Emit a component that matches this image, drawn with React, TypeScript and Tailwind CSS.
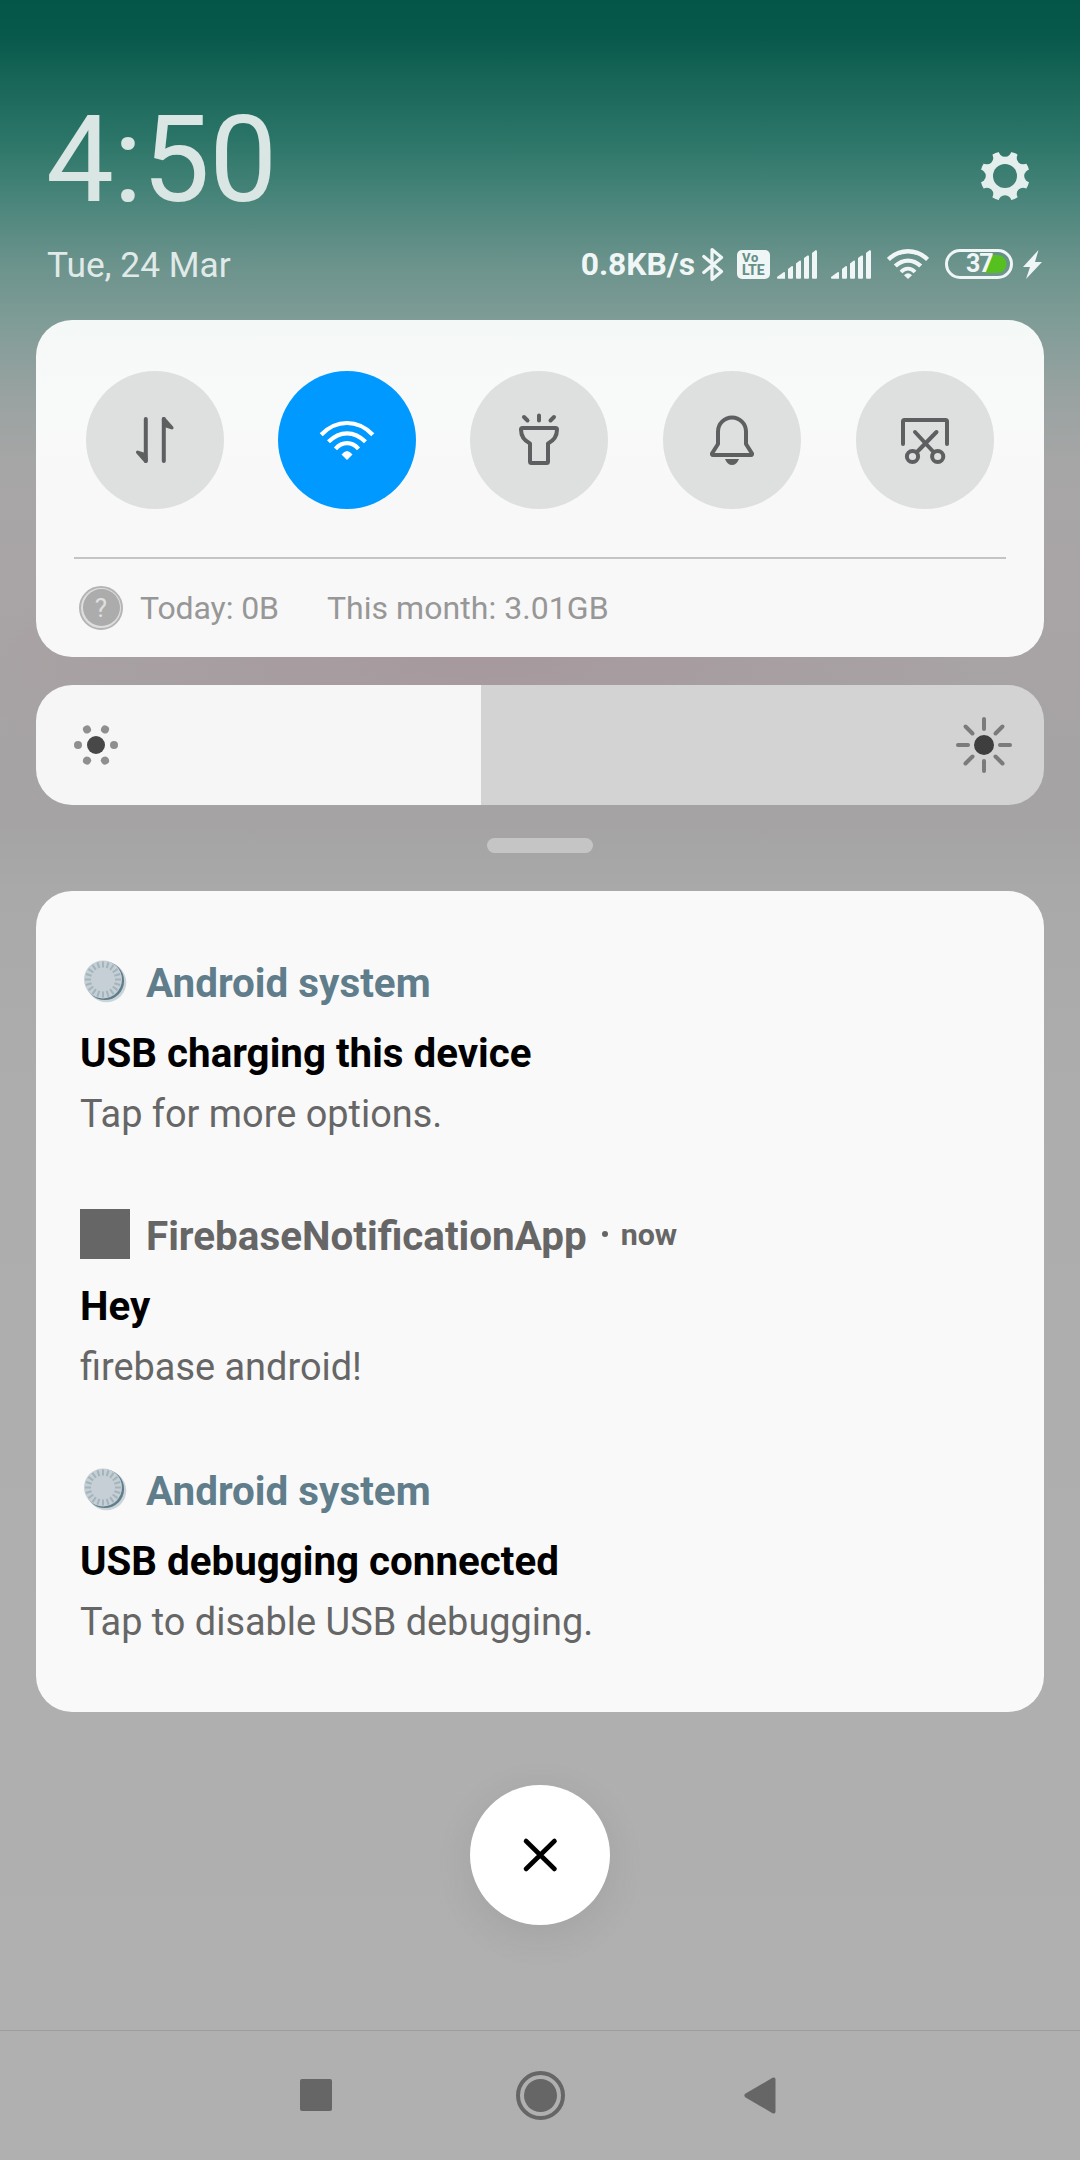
import type { ReactNode } from "react";

function Gear() {
  return (
    <svg width="50" height="50" viewBox="-25 -25 50 50">
      <mask id="teeth">
        <rect x="-25" y="-25" width="50" height="50" fill="#fff" />
        <circle r="12" fill="#000" />
        {[0, 45, 90, 135, 180, 225, 270, 315].map((a) => (
          <circle key={a} cy="-25.6" r="6.4" fill="#000" transform={`rotate(${a})`} />
        ))}
      </mask>
      <circle r="24.8" fill="#e4efed" mask="url(#teeth)" />
    </svg>
  );
}

function Bluetooth() {
  return (
    <svg width="22" height="35" viewBox="0 0 22 35" fill="none" stroke="#f0f6f5" strokeWidth="3.2" strokeLinejoin="round" strokeLinecap="round">
      <path d="M1.8 9.5 L19.5 24.5 L10 32.5 V2.5 L19.5 10.5 L1.8 25.5" />
    </svg>
  );
}

function VoLte() {
  return (
    <div className="flex h-[29px] w-[33px] flex-col rounded-[5px] bg-[#f0f6f5] pt-[1px] pl-[5px] text-[14px] leading-[13px] font-extrabold text-[#64908a]">
      <span className="text-[13px] tracking-[0.8px]">Vo</span>
      <span>LTE</span>
    </div>
  );
}

function Signal() {
  return (
    <svg width="40" height="29" viewBox="0 0 40 29" fill="#f0f6f5">
      <path d="M0 27 L6.5 22.3 Q8 21.5 8 23 V28.7 H1 Q0 28.7 0 27.5Z" />
      <path d="M11 19 L14.5 16.2 Q16 15.6 16 17 V27.7 Q16 28.7 15 28.7 H12 Q11 28.7 11 27.7Z" />
      <path d="M19 13.5 L22.5 10.8 Q24 10.2 24 11.5 V27.7 Q24 28.7 23 28.7 H20 Q19 28.7 19 27.7Z" />
      <path d="M27 8 L30.500 5.500 Q32 5 32 6.500 V27.7 Q32 28.7 31 28.7 H28 Q27 28.7 27 27.7Z" />
      <path d="M35 3 L38.500 .3 Q40 0 40 1.500 V27.7 Q40 28.7 39 28.7 H36 Q35 28.7 35 27.7Z" />
    </svg>
  );
}

function StatusWifi() {
  return (
    <svg width="42" height="30" viewBox="0 0 42 30" fill="none" stroke="#f0f6f5" strokeWidth="4.4">
      <path d="M1.400 10.500 Q10 2.200 21 2.200 T40.600 10.500" />
      <path d="M8.300 17 Q14 11.600 21 11.600 T33.700 17" />
      <path d="M14 23 Q17 19.600 21 19.600 T28 23" strokeWidth="3.800" />
      <path d="M17 26.200 Q21 22.500 25 26.200 L21 30Z" fill="#f0f6f5" stroke="none" />
    </svg>
  );
}

function Battery() {
  return (
    <div className="relative flex h-[30px] w-[68px] items-center rounded-full border-[3px] border-[#f0f6f5]">
      <svg className="absolute top-[3px] left-[37px]" width="22" height="18" viewBox="0 0 22 18">
        <path d="M8 0 H12.500 A9 9 0 0 1 12.500 18 H0 V14Z" fill="#56c020" />
      </svg>
      <span className="relative ml-[18px] text-[25px] leading-[24px] font-bold tracking-[-1px] text-[#f0f6f5]">37</span>
    </div>
  );
}

function Bolt() {
  return (
    <svg width="19" height="29" viewBox="0 0 19 29" fill="#f0f6f5">
      <path d="M15.500 0 L12 12 H19 L3 29 L7 17 H0Z" />
    </svg>
  );
}

const stroke = { fill: "none", stroke: "#5e5f60", strokeWidth: 4, strokeLinecap: "round", strokeLinejoin: "round" } as const;

function DataIcon() {
  return (
    <svg width="60" height="60" viewBox="-30 -30 60 60" {...stroke}>
      <path d="M-9.200 -21 V21" />
      <path d="M8.800 21 V-21" />
      <path d="M-8 13.500 L-17.500 10.500 Q-20 11.500 -18.500 13.500 L-10.500 22.500 Q-8 24 -7.200 21Z" fill="#5e5f60" stroke="none" />
      <path d="M7.600 -13.500 L17 -10.500 Q19.500 -11.500 18 -13.500 L10 -22.500 Q7.500 -24 6.800 -21Z" fill="#5e5f60" stroke="none" />
    </svg>
  );
}

function WifiIcon() {
  return (
    <svg width="60" height="60" viewBox="-30 -30 60 60" fill="none" stroke="#fff" strokeWidth="4.200">
      <path d="M-25.800 -5.300 Q-14.500 -17 0 -17 T25.800 -5.300" />
      <path d="M-18.500 1.800 Q-10 -6.700 0 -6.700 T18.500 1.800" />
      <path d="M-11.500 8.800 Q-6.500 3.200 0 3.200 T11.500 8.800" />
      <path d="M-5.500 14.500 Q0 7.500 5.500 14.500 L0 20Z" fill="#fff" stroke="none" />
    </svg>
  );
}

function TorchIcon() {
  return (
    <svg width="60" height="60" viewBox="-30 -30 60 60" {...stroke}>
      <path d="M0 -24.500 V-19.500 M-15 -23 L-11.500 -19.500 M15 -23 L11.500 -19.500" />
      <path d="M-16.500 -12 H16.500 Q18 -12 18 -10.500 Q18 -1 9 3.500 V21.500 Q9 23 7.500 23 H-7.500 Q-9 23 -9 21.500 V3.500 Q-18 -1 -18 -10.500 Q-18 -12 -16.500 -12Z" />
    </svg>
  );
}

function BellIcon() {
  return (
    <svg width="60" height="60" viewBox="-30 -30 60 60" {...stroke}>
      <path d="M-14 -8.500 A14 14 0 0 1 14 -8.500 V4 L20 13.500 Q20.300 15 19 15 H-19 Q-20.300 15 -20 13.500 L-14 4Z" />
      <path d="M-7 19 H7 Q4.500 25 0 25 T-7 19Z" fill="#5e5f60" stroke="none" />
    </svg>
  );
}

function ScreenshotIcon() {
  return (
    <svg width="60" height="60" viewBox="-30 -30 60 60" {...stroke}>
      <path d="M-22 4 V-18.500 Q-22 -20 -20.500 -20 H20.500 Q22 -20 22 -18.500 V4" />
      <path d="M-10 -8 L8.500 12 M11.500 -8 L-8 12" />
      <circle cx="-12.500" cy="16.500" r="5.600" />
      <circle cx="12.700" cy="16.500" r="5.600" />
    </svg>
  );
}

function Toggle({ on, children }: { on?: boolean; children: ReactNode }) {
  return (
    <button className={`flex size-[138px] shrink-0 items-center justify-center rounded-full ${on ? "bg-[#0099ff]" : "bg-[#dedfdf]"}`}>
      {children}
    </button>
  );
}

function LowBrightness() {
  return (
    <svg width="46" height="46" viewBox="-23 -23 46 46">
      <circle r="9" fill="#484848" />
      {[0, 60, 120, 180, 240, 300].map((a) => (
        <circle key={a} cx="18" r="4" fill="#8f8f8f" transform={`rotate(${a})`} />
      ))}
    </svg>
  );
}

function HighBrightness() {
  return (
    <svg width="58" height="58" viewBox="-29 -29 58 58" stroke="#7b7b7b" strokeWidth="4" strokeLinecap="round">
      <circle r="10" fill="#3e3e3e" stroke="none" />
      {[0, 90, 180, 270].map((a) => (
        <g key={a} transform={`rotate(${a})`}>
          <path d="M16 0 H26" />
          <path d="M11.500 11.500 L18.500 18.500" />
        </g>
      ))}
    </svg>
  );
}

function SystemIcon() {
  return (
    <svg className="mt-[4px] ml-[4px]" width="43" height="43" viewBox="0 0 43 43">
      <circle cx="22.500" cy="22.500" r="19.800" fill="#cbd5d9" />
      <circle cx="20.800" cy="20.800" r="19.300" fill="#607d8b" />
      <circle cx="19" cy="19.500" r="19" fill="#c5cfd5" />
      {Array.from({ length: 20 }, (_, i) => (
        <path key={i} d="M0 -18 V-12" stroke="#a3b4bb" strokeWidth="2" transform={`translate(19 19.500) rotate(${i * 18})`} />
      ))}
    </svg>
  );
}

type Note = { app: string; title: string; text: string; time?: string; system: boolean };

const notes: Note[] = [
  { app: "Android system", title: "USB charging this device", text: "Tap for more options.", system: true },
  { app: "FirebaseNotificationApp", title: "Hey", text: "firebase android!", time: "now", system: false },
  { app: "Android system", title: "USB debugging connected", text: "Tap to disable USB debugging.", system: true },
];

function Notification({ note }: { note: Note }) {
  return (
    <article className={note.system ? "h-[253px]" : "h-[255px]"}>
      <div className="flex h-[50px]">
        <div className="w-[66px] shrink-0">{note.system ? <SystemIcon /> : <div className="size-[50px] bg-[#666]" />}</div>
        <span className={`mt-[3px] text-[40.4px] leading-[50px] font-bold whitespace-nowrap ${note.system ? "text-[#607d8b]" : "text-[#666]"}`}>{note.app}</span>
        {note.time && (
          <div className="flex items-center">
            <span className="ml-[15px] size-[6px] rounded-full bg-[#666]" />
            <span className="mt-[1px] ml-[13px] text-[30.4px] leading-[50px] font-bold text-[#666]">{note.time}</span>
          </div>
        )}
      </div>
      <h2 className="mt-[23px] text-[40.3px] leading-[50px] font-bold text-black">{note.title}</h2>
      <p className="mt-[10px] text-[37.9px] leading-[50px] text-[#666]">{note.text}</p>
    </article>
  );
}

export default function App() {
  return (
    <div className="flex h-[2160px] w-[1080px] flex-col overflow-hidden bg-[radial-gradient(ellipse_560px_130px_at_480px_660px,rgba(166,148,154,0.7),rgba(166,152,156,0.45)_50%,rgba(166,156,158,0)),linear-gradient(180deg,#045648_0px,#07594b_35px,#186658_80px,#297466_135px,#4c867c_205px,#6b938c_265px,#7f9c96_320px,#9aa3a2_400px,#a7a6a6_470px,#a9a5a6_560px,#a8a4a5_670px,#a5a3a4_820px,#a9a9a9_890px,#adadad_1100px,#afafaf_1700px,#b0b0b0_2160px)] font-['Roboto',sans-serif]">
      <header className="h-[320px] pt-[100px] pr-[38px] pl-[46px]">
        <div className="flex h-[120px] justify-between">
          <h1 className="text-[121px] leading-[120px] tracking-[-0.7px] text-[#d9e6e4]">4:50</h1>
          <div className="mt-[51px] mr-[12px]">
            <Gear />
          </div>
        </div>
        <div className="mt-[24px] flex h-[40px] items-center">
          <span className="mt-[2px] ml-[1px] text-[35.3px] leading-[40px] text-[#e0eae8]">Tue, 24 Mar</span>
          <div className="ml-auto flex items-center">
            <span className="text-[31.8px] leading-[40px] font-bold text-[#f0f6f5]">0.8KB/s</span>
            <div className="ml-[7px]"><Bluetooth /></div>
            <div className="ml-[13px]"><VoLte /></div>
            <div className="ml-[7px]"><Signal /></div>
            <div className="ml-[14px]"><Signal /></div>
            <div className="ml-[16px]"><StatusWifi /></div>
            <div className="ml-[16px]"><Battery /></div>
            <div className="ml-[10px]"><Bolt /></div>
          </div>
        </div>
      </header>

      <main className="flex grow flex-col px-[36px]">
        <section className="h-[337px] rounded-[36px] bg-[linear-gradient(180deg,#f4f8f7,#f8faf9_20%,#f8f8f8_50%,#f8f8f8)] px-[38px] pt-[51px]">
          <div className="flex gap-[54px] px-[12px] [&>*:nth-child(n+4)]:ml-px">
            <Toggle><DataIcon /></Toggle>
            <Toggle on><WifiIcon /></Toggle>
            <Toggle><TorchIcon /></Toggle>
            <Toggle><BellIcon /></Toggle>
            <Toggle><ScreenshotIcon /></Toggle>
          </div>
          <div className="mt-[48px] h-[2px] bg-[#c4c4c4]" />
          <div className="flex h-[97px] items-center pl-[5px] text-[32px] leading-[40px] text-[#979797]">
            <div className="flex size-[44px] items-center justify-center rounded-full border-2 border-[#b5b5b5] bg-[#dedede]">
              <div className="flex size-[37px] items-center justify-center rounded-full bg-[#acacac] text-[26px] text-[#e0e0e0]">?</div>
            </div>
            <span className="ml-[17px] tracking-[-0.1px]">Today: 0B</span>
            <span className="ml-[48px] tracking-[0.05px]">This month: 3.01GB</span>
          </div>
        </section>

        <section className="mt-[28px] flex h-[120px] overflow-hidden rounded-[36px]">
          <div className="flex w-[445px] items-center bg-[#f6f6f6] pl-[37px]"><LowBrightness /></div>
          <div className="flex grow items-center justify-end bg-[#d4d3d3] pr-[31px]"><HighBrightness /></div>
        </section>

        <div className="mt-[33px] h-[15px] w-[106px] self-center rounded-full bg-[#c5c5c5]" />

        <section className="mt-[38px] h-[821px] rounded-[36px] bg-[#f9f9f9] px-[44px] pt-[65px]">
          {notes.map((n) => (
            <Notification key={n.title} note={n} />
          ))}
        </section>

        <button className="mt-[73px] flex size-[140px] items-center justify-center self-center rounded-full bg-white shadow-[0_8px_40px_rgba(0,0,0,0.08)]">
          <svg width="40" height="40" viewBox="-20 -20 40 40" stroke="#000" strokeWidth="4.600" strokeLinecap="round">
            <path d="M-14 -14 L14.500 14 M14.500 -14 L-14 14" />
          </svg>
        </button>
      </main>

      <nav className="flex h-[130px] items-center justify-between border-t border-[#9d9d9d] pr-[304px] pb-[1px] pl-[300px]">
        <div className="size-[32px] rounded-[2px] bg-[#666]" />
        <div className="ml-[4px] flex size-[49px] items-center justify-center rounded-full border-4 border-[#666]">
          <div className="size-[33px] rounded-full bg-[#666]" />
        </div>
        <svg width="32" height="37" viewBox="0 0 32 37" fill="#666">
          <path d="M1.200 16.800 L28.500 .8 Q31.500 -.5 31.500 2.500 V34.500 Q31.500 37.500 28.500 36.200 L1.200 20.200 Q-.5 18.500 1.200 16.800Z" />
        </svg>
      </nav>
    </div>
  );
}
